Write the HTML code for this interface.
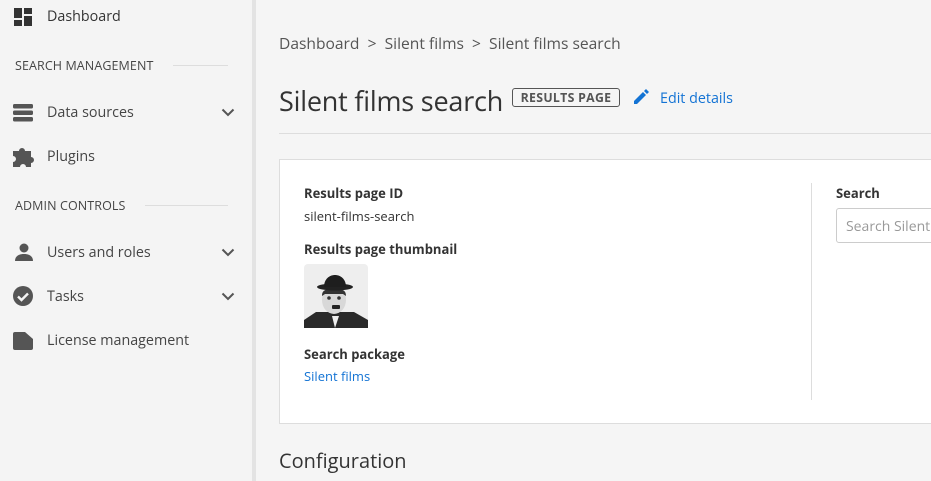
<!DOCTYPE html>
<html><head><meta charset="utf-8"><style>
*{box-sizing:border-box;margin:0;padding:0}
body{width:931px;height:481px;overflow:hidden;background:#f5f5f5;font-family:"Open Sans","Liberation Sans",sans-serif;color:#333;position:relative}
.side{position:absolute;left:0;top:0;width:256px;height:481px;background:#f4f4f4;border-right:4px solid #e3e3e3}
.item{position:absolute;left:47px;font-size:14.3px;color:#444}
.ic{position:absolute;left:13px}
.hd{position:absolute;left:15px;font-size:12.5px;color:#444;letter-spacing:.1px}
.ln{position:absolute;height:1px;background:#ddd;right:24px}
.chev{position:absolute;left:221px}
.main{position:absolute;left:256px;top:0;right:0;bottom:0}
.crumb{position:absolute;left:23px;top:32px;font-size:15.6px;color:#555}
h1{position:absolute;left:23px;top:82px;font-size:27px;font-weight:normal;color:#333;letter-spacing:-.2px}
.badge{position:absolute;left:256px;top:88px;border:1.3px solid #555;border-radius:3px;font-size:12.3px;font-weight:bold;color:#555;padding:0px 6px;letter-spacing:.3px;width:108px;text-align:center}
.edit{position:absolute;left:404px;top:89px;font-size:14.3px;color:#1373d4}
.hr{position:absolute;left:23px;right:0;top:133px;height:1px;background:#ddd}
.card{position:absolute;left:23px;top:159px;right:-2px;height:265px;background:#fff;border:1px solid #ddd}
.lbl{position:absolute;font-size:13px;font-weight:bold;color:#333}
.val{position:absolute;font-size:13px;color:#333}
.vl{position:absolute;left:531px;top:23px;width:1px;height:217px;background:#ddd}
.inp{position:absolute;left:556px;top:48px;width:120px;height:35px;border:1px solid #ccc;border-radius:3px;font-size:14px;color:#999;padding:8px 9px;white-space:nowrap;overflow:hidden}
h2{position:absolute;left:23px;top:447px;font-size:20px;font-weight:normal;color:#333}
</style></head><body>
<div class="side">
<svg class="ic" style="top:8px" width="20" height="18" viewBox="0 0 20 18"><rect x="1" y="0" width="8" height="10" fill="#333"/><rect x="11" y="0" width="8" height="6" fill="#333"/><rect x="1" y="12" width="8" height="6" fill="#333"/><rect x="11" y="8" width="8" height="10" fill="#333"/></svg>
<div class="item" style="top:7px;color:#333">Dashboard</div>
<div class="hd" style="top:57px">SEARCH MANAGEMENT</div><div class="ln" style="left:173px;top:65px"></div>
<svg class="ic" style="top:104px" width="22" height="18" viewBox="0 0 22 18"><rect x="0" y="0" width="20" height="4.5" rx="1.5" fill="#555"/><rect x="0" y="6.5" width="20" height="4.5" rx="1.5" fill="#555"/><rect x="0" y="13" width="20" height="4.5" rx="1.5" fill="#555"/></svg>
<div class="item" style="top:103px">Data sources</div>
<svg class="chev" style="top:108px" width="14" height="9" viewBox="0 0 14 9"><path d="M1.5 1.5L7 7l5.5-5.5" stroke="#555" stroke-width="2" fill="none"/></svg>
<svg class="ic" style="top:146px" width="22" height="22" viewBox="0 0 22 22"><path d="M0 5h6a3 3 0 1 1 6 0h6v6a3 3 0 1 1 0 6v4H13a3 3 0 1 0-6 0H0v-5a3 3 0 1 0 0-6z" fill="#555"/></svg>
<div class="item" style="top:147px">Plugins</div>
<div class="hd" style="top:197px">ADMIN CONTROLS</div><div class="ln" style="left:145px;top:205px"></div>
<svg class="ic" style="top:243px" width="22" height="20" viewBox="0 0 22 20"><circle cx="11" cy="5" r="4.5" fill="#555"/><path d="M2 18c0-5 4-7 9-7s9 2 9 7z" fill="#555"/></svg>
<div class="item" style="top:243px">Users and roles</div>
<svg class="chev" style="top:248px" width="14" height="9" viewBox="0 0 14 9"><path d="M1.5 1.5L7 7l5.5-5.5" stroke="#555" stroke-width="2" fill="none"/></svg>
<svg class="ic" style="top:286px" width="22" height="22" viewBox="0 0 22 22"><circle cx="10" cy="10" r="10" fill="#555"/><path d="M5 10.5l3.5 3.5L15 7.5" stroke="#f4f4f4" stroke-width="2.4" fill="none"/></svg>
<div class="item" style="top:287px">Tasks</div>
<svg class="chev" style="top:292px" width="14" height="9" viewBox="0 0 14 9"><path d="M1.5 1.5L7 7l5.5-5.5" stroke="#555" stroke-width="2" fill="none"/></svg>
<svg class="ic" style="top:332px" width="22" height="18" viewBox="0 0 22 18"><path d="M2 0h10l8 7v9a2 2 0 0 1-2 2H2a2 2 0 0 1-2-2V2a2 2 0 0 1 2-2z" fill="#555"/></svg>
<div class="item" style="top:331px">License management</div>
</div>
<div class="main">
<div class="crumb">Dashboard &nbsp;&gt;&nbsp; Silent films &nbsp;&gt;&nbsp; Silent films search</div>
<h1>Silent films search</h1>
<div class="badge">RESULTS PAGE</div>
<svg style="position:absolute;left:377px;top:88px" width="17" height="17" viewBox="0 0 17 17"><path d="M1 13v3h3l9-9-3-3zM11 3l3 3 2-2-3-3z" fill="#1373d4"/></svg>
<div class="edit">Edit details</div>
<div class="hr"></div>
<div class="card">
<div class="lbl" style="left:24px;top:24px">Results page ID</div>
<div class="val" style="left:24px;top:47px">silent-films-search</div>
<div class="lbl" style="left:24px;top:80px">Results page thumbnail</div>
<svg style="position:absolute;left:24px;top:104px" width="64" height="64" viewBox="0 0 64 64"><rect width="64" height="64" rx="4" fill="#eeeeee"/><path d="M0 64V56l12-8h38l14 8v8z" fill="#2a2a2a"/><ellipse cx="30" cy="36" rx="12" ry="14" fill="#d8d8d8"/><path d="M18 32c0-6 4-6 4-6h16s4 0 4 6l-3-2H21z" fill="#333"/><ellipse cx="31" cy="23" rx="18" ry="3.5" fill="#222"/><path d="M20 23c0-16 22-16 22 0z" fill="#1e1e1e"/><rect x="28" y="41" width="8" height="4" rx="1" fill="#222"/><circle cx="25" cy="34" r="1.8" fill="#333"/><circle cx="35" cy="34" r="1.8" fill="#333"/><path d="M28 52l3 12 4-12z" fill="#eee"/></svg>
<div class="lbl" style="left:24px;top:185px">Search package</div>
<div class="val" style="left:24px;top:207px;color:#1373d4">Silent films</div>
<div class="vl"></div>
<div class="lbl" style="left:556px;top:24px">Search</div>
<div class="inp">Search Silent films</div>
</div>
<h2>Configuration</h2>
</div>
</body></html>
